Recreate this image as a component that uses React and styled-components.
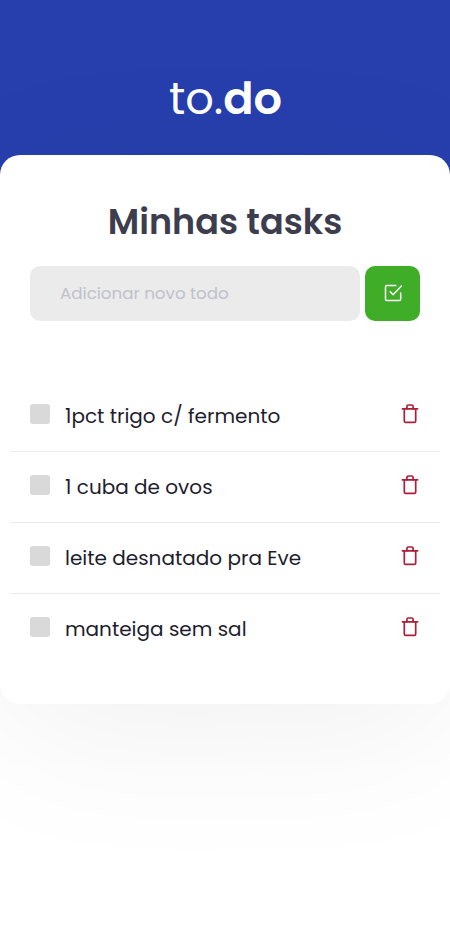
import React, { useState } from "react";
import styled, { createGlobalStyle } from "styled-components";

const GlobalStyle = createGlobalStyle`
  * { box-sizing: border-box; margin: 0; padding: 0; }
  body {
    background: #fff;
    font-family: Poppins, Inter, sans-serif;
    -webkit-font-smoothing: antialiased;
  }
  button { border: 0; background: none; cursor: pointer; }
`;

const Page = styled.div`
  min-height: 950px;
  overflow: hidden;
`;

const Header = styled.header`
  height: 175px;
  padding: 70px 0 0 1px;
  background: #263fad;
  text-align: center;
`;

const Logo = styled.h1`
  color: #fff;
  font-size: 44.7px;
  line-height: 58px;
  font-weight: 400;
`;

const LogoStrong = styled.span`
  font-weight: 600;
`;

const Card = styled.main`
  position: relative;
  height: 549px;
  margin-top: -20px;
  padding: 40px 10px 0;
  border-radius: 20px;
  background: #fff;
  box-shadow: 0 30px 160px rgba(0, 0, 0, 0.06);
`;

const Title = styled.h2`
  color: #3d3d4e;
  font-size: 35px;
  line-height: 54px;
  font-weight: 600;
  text-align: center;
`;

const Form = styled.form`
  display: flex;
  gap: 5px;
  margin: 17px 20px 0;
`;

const TaskInput = styled.input`
  flex: 1;
  min-width: 0;
  height: 55px;
  padding: 0 30px 2px;
  border: 0;
  border-radius: 10px;
  outline: 0;
  background: #ebebeb;
  color: #1d1d2e;
  font: inherit;
  font-size: 16.7px;
  &::placeholder { color: #c1c1cb; }
`;

const AddButton = styled.button`
  display: flex;
  align-items: center;
  justify-content: center;
  width: 55px;
  height: 55px;
  border-radius: 10px;
  background: #3fad27;
`;

const List = styled.ul`
  margin-top: 60px;
  list-style: none;
`;

const Item = styled.li`
  display: flex;
  align-items: flex-start;
  height: 71px;
  padding: 23px 20px 0;
  border-bottom: 1px solid #ebebeb;
  &:last-child { border-bottom: 0; }
`;

const Checkbox = styled.button`
  flex: none;
  width: 20px;
  height: 20px;
  border-radius: 3px;
  background: ${(p) => (p.$checked ? "#3fad27" : "#d9d9d9")};
`;

const Label = styled.span`
  flex: 1;
  margin-left: 15px;
  color: #1d1d2e;
  font-size: 20px;
  line-height: 24px;
  white-space: nowrap;
`;

const DeleteButton = styled.button`
  width: 20px;
  height: 20px;
`;

const Icon = styled.svg`
  display: block;
  fill: none;
  stroke: currentColor;
  stroke-linecap: round;
  stroke-linejoin: round;
`;

const CheckIcon = styled(Icon)`color: #fff;`;
const TrashIcon = styled(Icon)`color: #ad1f39;`;

const initialTasks = [
  { text: "1pct trigo c/ fermento" },
  { text: "1 cuba de ovos" },
  { text: "leite desnatado pra Eve" },
  { text: "manteiga sem sal" },
];

export default function App() {
  const [tasks, setTasks] = useState(initialTasks);
  const [draft, setDraft] = useState("");

  const addTask = (event) => {
    event.preventDefault();
    if (!draft.trim()) return;
    setTasks([...tasks, { text: draft }]);
    setDraft("");
  };
  const toggle = (index) =>
    setTasks(tasks.map((t, i) => (i === index ? { ...t, done: !t.done } : t)));
  const remove = (index) => setTasks(tasks.filter((_, i) => i !== index));

  return (
    <Page>
      <GlobalStyle />
      <Header>
        <Logo>to.<LogoStrong>do</LogoStrong></Logo>
      </Header>
      <Card>
        <Title>Minhas tasks</Title>
        <Form onSubmit={addTask}>
          <TaskInput
            placeholder="Adicionar novo todo"
            value={draft}
            onChange={(e) => setDraft(e.target.value)}
          />
          <AddButton type="submit">
            <CheckIcon width="21" height="21" viewBox="0 0 21 21" strokeWidth="1.5">
              <path d="M13.9 2.5H4.9Q3.5 2.5 3.5 3.9V16.2Q3.5 17.6 4.9 17.6H17.3Q18.7 17.6 18.7 16.2V10.1" />
              <path d="M8.3 8.9L11.1 11.7L19.4 3" />
            </CheckIcon>
          </AddButton>
        </Form>
        <List>
          {tasks.map((task, index) => (
            <Item key={index}>
              <Checkbox $checked={task.done} onClick={() => toggle(index)} />
              <Label>{task.text}</Label>
              <DeleteButton onClick={() => remove(index)}>
                <TrashIcon width="20" height="20" viewBox="0 0 20 20" strokeWidth="1.7">
                  <path d="M2.4 4.8H17.6" />
                  <path d="M4.3 4.8V17Q4.3 18.4 5.7 18.4H14.3Q15.7 18.4 15.7 17V4.8" />
                  <path d="M6.9 4.8V2.4Q6.9 1 8.3 1H11.7Q13.1 1 13.1 2.4V4.8" />
                </TrashIcon>
              </DeleteButton>
            </Item>
          ))}
        </List>
      </Card>
    </Page>
  );
}
